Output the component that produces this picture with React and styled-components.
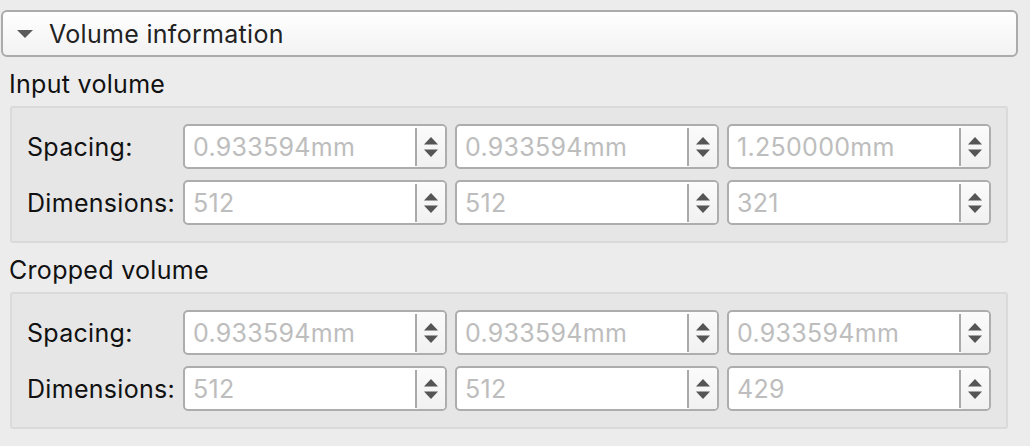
import React from "react";
import styled, { createGlobalStyle } from "styled-components";

const Global = createGlobalStyle`
  html, body { margin: 0; padding: 0; background: #ececec; }
  body { font-family: Inter, "Noto Sans", "Liberation Sans", sans-serif; }
`;

const Page = styled.div`
  width: 1030px;
  height: 446px;
  box-sizing: border-box;
  padding: 10px 0 0 1px;
  background: #ececec;
  color: #1e1e1e;
  font-size: 25px;
  letter-spacing: 0.3px;
`;

const Header = styled.div`
  box-sizing: border-box;
  width: 1017px;
  height: 47px;
  border: 2px solid #ababab;
  border-radius: 6px;
  background: linear-gradient(#ffffff, #f2f2f2);
  display: flex;
  align-items: center;
  padding-left: 14px;
  gap: 16px;
  color: #222;
`;

const Caret = styled.svg`
  width: 16px;
  height: 8px;
  flex: none;
`;

const Section = styled.div`
  padding-left: 8px;
`;

const Title = styled.div`
  line-height: 28px;
  margin: 13px 0 8px;
  color: #111;
`;

const Group = styled.div`
  box-sizing: border-box;
  margin-left: 1px;
  width: 998px;
  border: 2px solid #dadada;
  border-radius: 3px;
  background: #e6e6e6;
  padding: 16px 15px 16px 15px;
  display: grid;
  grid-template-columns: 148px repeat(3, 264px);
  column-gap: 8px;
  row-gap: 11px;
`;

const Label = styled.div`
  display: flex;
  align-items: center;
  color: #111;
  white-space: nowrap;
`;

const Spin = styled.div`
  box-sizing: border-box;
  height: 45px;
  border: 2px solid #adadad;
  border-radius: 5px;
  background: #fff;
  display: flex;
  overflow: hidden;
`;

const Value = styled.div`
  flex: 1;
  display: flex;
  align-items: center;
  padding-left: 8px;
  color: #bdbdbd;
  border-right: 2px solid #a9a9a9;
  margin: 2px 0 1px;
`;

const Arrows = styled.div`
  width: 28px;
  flex: none;
  display: flex;
  align-items: center;
  justify-content: center;
  background: linear-gradient(#fbfbfb, #f1f1f1);
`;

const ArrowIcon = () => (
  <svg width="14" height="22" viewBox="0 0 14 22">
    <polygon points="7,1 14,8.5 0,8.5" fill="#555" />
    <polygon points="0,13.5 14,13.5 7,21" fill="#555" />
  </svg>
);

const SpinBox = ({ value }) => (
  <Spin>
    <Value>{value}</Value>
    <Arrows>
      <ArrowIcon />
    </Arrows>
  </Spin>
);

const VolumeGroup = ({ title, spacing, dims }) => (
  <>
    <Title>{title}</Title>
    <Group>
      <Label>Spacing:</Label>
      {spacing.map((v, i) => (
        <SpinBox key={"s" + i} value={v} />
      ))}
      <Label>Dimensions:</Label>
      {dims.map((v, i) => (
        <SpinBox key={"d" + i} value={v} />
      ))}
    </Group>
  </>
);

export default function App() {
  return (
    <Page>
      <Global />
      <Header>
        <Caret viewBox="0 0 16 8">
          <polygon points="0,0 16,0 8,8" fill="#5a5a5a" />
        </Caret>
        <span>Volume information</span>
      </Header>
      <Section>
        <VolumeGroup
          title="Input volume"
          spacing={["0.933594mm", "0.933594mm", "1.250000mm"]}
          dims={["512", "512", "321"]}
        />
        <VolumeGroup
          title="Cropped volume"
          spacing={["0.933594mm", "0.933594mm", "0.933594mm"]}
          dims={["512", "512", "429"]}
        />
      </Section>
    </Page>
  );
}
